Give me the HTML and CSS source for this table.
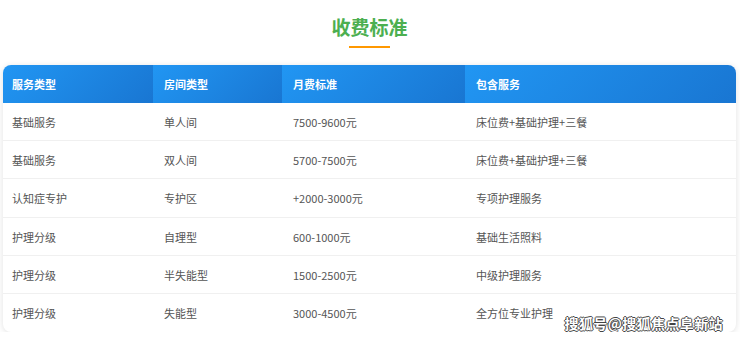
FILE: index.html
```html
<!DOCTYPE html>
<html lang="zh-CN">
  <head>
    <meta charset="utf-8">
    <meta name="viewport" content="width=device-width, initial-scale=1">
    <title>收费标准</title>
    <link rel="stylesheet" href="styles.css">
  </head>
  <body>
    <section class="pricing">
      <h2 class="pricing-title">收费标准</h2>
      <div class="pricing-bar"></div>
      <div class="pricing-card">
        <table class="price-table">
          <colgroup>
            <col class="col-a">
            <col class="col-b">
            <col class="col-c">
            <col class="col-d">
          </colgroup>
          <thead>
            <tr>
              <th>服务类型</th>
              <th>房间类型</th>
              <th>月费标准</th>
              <th>包含服务</th>
            </tr>
          </thead>
          <tbody>
            <tr><td>基础服务</td><td>单人间</td><td>7500-9600元</td><td>床位费+基础护理+三餐</td></tr>
            <tr><td>基础服务</td><td>双人间</td><td>5700-7500元</td><td>床位费+基础护理+三餐</td></tr>
            <tr><td>认知症专护</td><td>专护区</td><td>+2000-3000元</td><td>专项护理服务</td></tr>
            <tr><td>护理分级</td><td>自理型</td><td>600-1000元</td><td>基础生活照料</td></tr>
            <tr><td>护理分级</td><td>半失能型</td><td>1500-2500元</td><td>中级护理服务</td></tr>
            <tr><td>护理分级</td><td>失能型</td><td>3000-4500元</td><td>全方位专业护理</td></tr>
          </tbody>
        </table>
        <span class="watermark">搜狐号@搜狐焦点阜新站</span>
      </div>
    </section>
  </body>
</html>
```

FILE: styles.css
```css
html, body {
  margin: 0;
  background: #fff;
  font-family: "Noto Sans CJK SC", "Noto Sans", sans-serif;
}
.pricing {
  padding: 12px 4px 0 3px;
}
.pricing-title {
  margin: 0;
  text-align: center;
  font-size: 19px;
  line-height: 30px;
  font-weight: 700;
  color: #4caf50;
}
.pricing-bar {
  width: 41px;
  height: 2px;
  margin: 4px auto 17px;
  background: #ff9800;
}
.pricing-card {
  position: relative;
  border-radius: 8px;
  overflow: hidden;
  background: #fff;
  box-shadow: 0 1px 6px rgba(0, 0, 0, 0.12);
}
.price-table {
  width: 100%;
  border-collapse: collapse;
  table-layout: fixed;
  font-size: 11px;
}
.col-a { width: 150px; }
.col-b { width: 129px; }
.col-c { width: 183px; }
.price-table th {
  height: 38px;
  padding: 0 11px;
  text-align: left;
  font-weight: 700;
  color: #fff;
  background: linear-gradient(135deg, #2196f3, #1976d2);
}
.price-table td {
  height: 37px;
  padding: 0 11px;
  color: #555;
  border-bottom: 1px solid #f0f0f0;
}
.price-table tbody tr:nth-child(3n) td {
  height: 38px;
}
.price-table th:first-child,
.price-table td:first-child {
  padding-left: 9px;
}
.price-table tbody tr:last-child td {
  border-bottom: none;
}
.watermark {
  position: absolute;
  right: 13px;
  bottom: 0;
  font-size: 14px;
  font-weight: 700;
  line-height: 18px;
  letter-spacing: 0.4px;
  color: #fff;
  text-shadow: 1px 0 0 #444, -1px 0 0 #444, 0 1px 0 #444, 0 -1px 0 #444;
}
```
